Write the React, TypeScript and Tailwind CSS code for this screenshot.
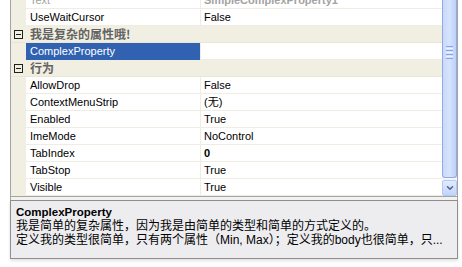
import React from 'react';
import { ChevronDown } from 'lucide-react';

type Row =
  | { kind: 'prop'; name: string; value: string; bold?: boolean; faded?: boolean; selected?: boolean }
  | { kind: 'cat'; label: string };

const ROWS: Row[] = [
  { kind: 'prop', name: 'Text', value: 'SimpleComplexProperty1', bold: true, faded: true },
  { kind: 'prop', name: 'UseWaitCursor', value: 'False' },
  { kind: 'cat', label: '我是复杂的属性哦!' },
  { kind: 'prop', name: 'ComplexProperty', value: '', selected: true },
  { kind: 'cat', label: '行为' },
  { kind: 'prop', name: 'AllowDrop', value: 'False' },
  { kind: 'prop', name: 'ContextMenuStrip', value: '(无)' },
  { kind: 'prop', name: 'Enabled', value: 'True' },
  { kind: 'prop', name: 'ImeMode', value: 'NoControl' },
  { kind: 'prop', name: 'TabIndex', value: '0', bold: true },
  { kind: 'prop', name: 'TabStop', value: 'True' },
  { kind: 'prop', name: 'Visible', value: 'True' },
];

function CategoryRow({ label }: { label: string }) {
  return (
    <div className="flex h-[17px] shrink-0 bg-[#f1efe2] border-b border-[#e9e6d8]">
      <div className="w-[15px] shrink-0 flex items-center pl-[3px]">
        <div className="w-[9px] h-[9px] border border-[#202020] flex items-center justify-center">
          <div className="w-[5px] h-px bg-[#202020]" />
        </div>
      </div>
      <div className="pl-[4px] flex items-center text-[12px] font-bold text-[#636363] font-['Noto_Sans_CJK_SC',sans-serif]">
        {label}
      </div>
    </div>
  );
}

function PropRow({ row }: { row: Extract<Row, { kind: 'prop' }> }) {
  const tone = row.faded ? 'text-[#a3a3a3]' : 'text-black';
  return (
    <div className="flex h-[17px] shrink-0">
      <div className="w-[15px] shrink-0 bg-[#f1efe2]" />
      <div
        className={
          row.selected
            ? 'w-[174px] shrink-0 flex items-center pl-[4px] bg-[#3162b1] text-white border-b border-[#3162b1]'
            : `w-[174px] shrink-0 flex items-center pl-[4px] bg-white border-b border-[#efede3] ${tone}`
        }
      >
        {row.name}
      </div>
      <div className="w-px shrink-0 bg-[#efede3]" />
      <div
        className={`flex-1 flex items-center pl-[3px] bg-white border-b border-[#efede3] ${tone} ${
          row.bold ? 'font-bold' : ''
        }`}
      >
        {row.value}
      </div>
    </div>
  );
}

function ScrollBar() {
  return (
    <div className="w-[15px] shrink-0 flex flex-col bg-[#f4f6fd]">
      <div className="h-[178px] flex flex-col items-center justify-start rounded-b-[3px] border-l border-b border-r border-[#93abe3] bg-gradient-to-r from-[#c9d9fc] via-[#d6e3fd] to-[#bcd0fa]">
        <div className="mt-[46px] flex flex-col gap-px">
          <div className="w-[7px] h-px bg-[#8aa4df]" />
          <div className="w-[7px] h-px bg-[#eef3fe]" />
          <div className="w-[7px] h-px bg-[#8aa4df]" />
          <div className="w-[7px] h-px bg-[#eef3fe]" />
          <div className="w-[7px] h-px bg-[#8aa4df]" />
          <div className="w-[7px] h-px bg-[#eef3fe]" />
          <div className="w-[7px] h-px bg-[#8aa4df]" />
        </div>
      </div>
      <div className="mt-[2px] h-[16px] rounded-[2px] border border-[#b3c8f5] bg-gradient-to-b from-[#e2ebfe] to-[#c2d4fb] flex items-center justify-center">
        <ChevronDown size={10} strokeWidth={3.5} color="#4d6185" />
      </div>
    </div>
  );
}

export default function App() {
  return (
    <div className="w-[462px] h-[267px] bg-white overflow-hidden font-['Liberation_Sans','Noto_Sans_CJK_SC',sans-serif] text-[11px]">
      <div className="ml-[10px] w-[448px] flex flex-col">
        <div className="h-[197px] flex border-l border-r border-b border-[#a4a4a4] overflow-hidden">
          <div className="w-[431px] shrink-0 flex flex-col -mt-[8px]">
            {ROWS.map((row, i) =>
              row.kind === 'cat' ? (
                <CategoryRow key={i} label={row.label} />
              ) : (
                <PropRow key={i} row={row} />
              )
            )}
          </div>
          <ScrollBar />
        </div>
        <div className="h-[3px] bg-[#f3f2ee] border-l border-r border-[#a4a4a4]" />
        <div className="h-[59px] bg-[#ededf0] border border-[#8e8e8e] pl-[5px] pt-[4px] shadow-[0_2px_3px_rgba(0,0,0,0.12)]">
          <div className="font-bold text-[11.5px] leading-[14px] text-black">ComplexProperty</div>
          <div className="text-[12px] leading-[14px] text-black whitespace-nowrap">
            我是简单的复杂属性，因为我是由简单的类型和简单的方式定义的。
          </div>
          <div className="text-[12px] leading-[14px] text-black whitespace-nowrap">
            定义我的类型很简单，只有两个属性（Min, Max）；定义我的body也很简单，只...
          </div>
        </div>
      </div>
    </div>
  );
}
